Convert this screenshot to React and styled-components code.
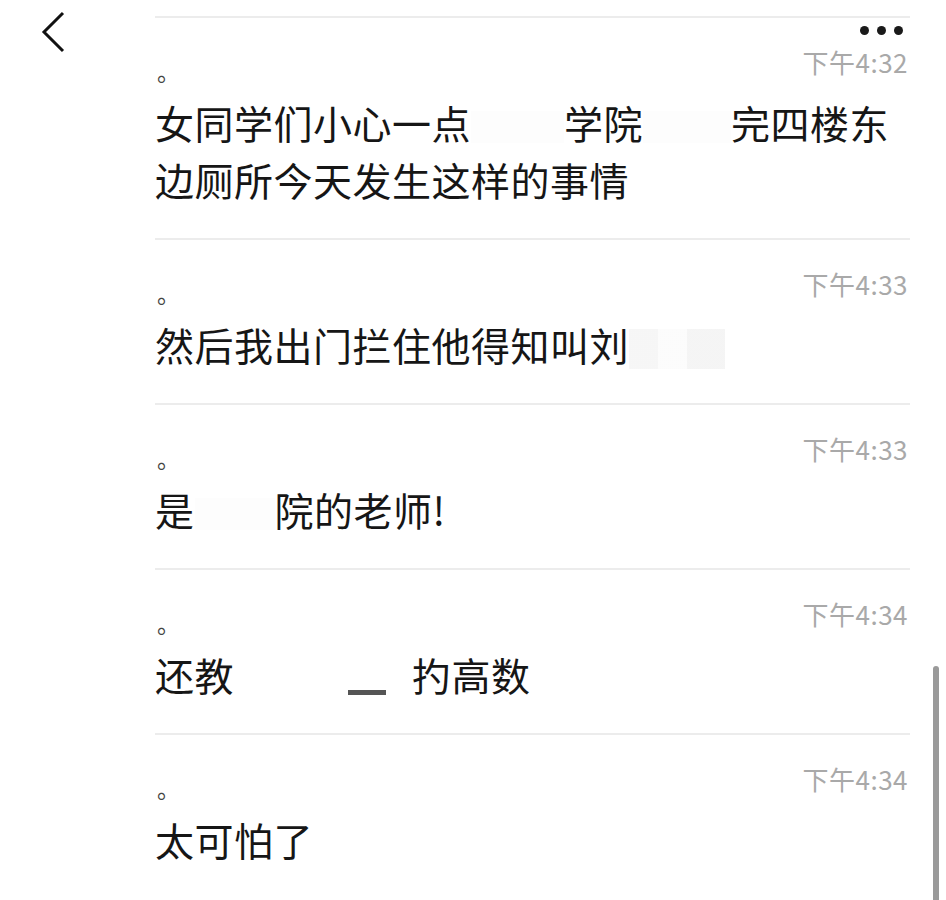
import React from 'react';
import styled, { createGlobalStyle } from 'styled-components';

const GlobalStyle = createGlobalStyle`
    html, body {
        margin: 0;
        padding: 0;
        background: #fff;
    }
    body {
        font-family: "Noto Sans CJK SC", "Noto Sans", sans-serif;
        color: #151515;
    }
`;

const Screen = styled.div`
    position: relative;
    width: 946px;
    height: 900px;
    overflow: hidden;
    display: flex;
    background: #fff;
`;

const Aside = styled.div`
    width: 155px;
    flex-shrink: 0;
    padding: 11px 0 0 40px;
    box-sizing: border-box;
`;

const BackButton = styled.button`
    border: 0;
    background: none;
    padding: 0;
    width: 28px;
    height: 42px;
    cursor: pointer;
`;

const List = styled.div`
    width: 755px;
    padding-top: 16px;
`;

const Row = styled.div`
    border-top: 2px solid #ececec;
    padding: 30px 0 30px 0;
`;

const Meta = styled.div`
    display: flex;
    justify-content: space-between;
    align-items: flex-start;
    height: 28px;
`;

const Dot = styled.span`
    font-size: 23px;
    line-height: 22px;
    color: #444;
    margin-top: 12px;
    padding-left: 2px;
`;

const Time = styled.span`
    font-family: "Noto Sans CJK SC", "Noto Sans", sans-serif;
    font-size: 26px;
    line-height: 28px;
    letter-spacing: 0.5px;
    color: #a9a9a9;
    padding-right: 2px;
`;

const Text = styled.p`
    margin: 18px 0 0;
    font-size: 39px;
    line-height: 57px;
    letter-spacing: 0.5px;
    color: #161616;
`;

const Redact = styled.span`
    display: inline-block;
    width: ${p => p.w}px;
    height: 32px;
    vertical-align: -4px;
    background: #fdfdfd;
`;

const Smudge = styled.span`
    display: inline-block;
    width: ${p => p.w}px;
    height: 40px;
    vertical-align: -8px;
    background:
        linear-gradient(90deg, #f4f4f4 0 30%, #fbfbfb 30% 60%, #f2f2f2 60% 100%);
    opacity: 0.8;
`;

const Bar = styled.span`
    display: inline-block;
    width: ${p => p.w}px;
    height: 32px;
    vertical-align: -4px;
    position: relative;

    &::after {
        content: '';
        position: absolute;
        left: ${p => p.at}px;
        bottom: 0;
        width: 38px;
        height: 5px;
        background: #555;
    }
`;

const MoreButton = styled.div`
    position: absolute;
    top: 26px;
    left: 860px;
    display: flex;
    gap: 8px;

    span {
        width: 9px;
        height: 9px;
        border-radius: 50%;
        background: #1a1a1a;
    }
`;

const ScrollThumb = styled.div`
    position: absolute;
    left: 933px;
    top: 666px;
    width: 6px;
    height: 250px;
    border-radius: 3px;
    background: #9a9a9a;
`;

const messages = [
    {
        time: '下午4:32',
        body: (
            <>
                女同学们小心一点<Redact w={93} />学院<Redact w={88} />完四楼东边厕所今天发生这样的事情
            </>
        ),
    },
    {
        time: '下午4:33',
        body: (
            <>
                然后我出门拦住他得知叫刘<Smudge w={96} />
            </>
        ),
    },
    {
        time: '下午4:33',
        body: (
            <>
                是<Redact w={80} />院的老师!
            </>
        ),
    },
    {
        time: '下午4:34',
        body: (
            <>
                还教<Bar w={178} at={114} />扚高数
            </>
        ),
    },
    {
        time: '下午4:34',
        body: <>太可怕了</>,
    },
];

const App = () => {
    return (
        <Screen>
            <GlobalStyle />
            <Aside>
                <BackButton aria-label="back">
                    <svg width="28" height="42" viewBox="0 0 28 42">
                        <polyline points="23,2 4,21 23,40" fill="none" stroke="#111" strokeWidth="3" />
                    </svg>
                </BackButton>
            </Aside>
            <List>
                {messages.map((m, i) => (
                    <Row key={i}>
                        <Meta>
                            <Dot>。</Dot>
                            <Time>{m.time}</Time>
                        </Meta>
                        <Text>{m.body}</Text>
                    </Row>
                ))}
            </List>
            <MoreButton>
                <span />
                <span />
                <span />
            </MoreButton>
            <ScrollThumb />
        </Screen>
    );
};

export default App;
